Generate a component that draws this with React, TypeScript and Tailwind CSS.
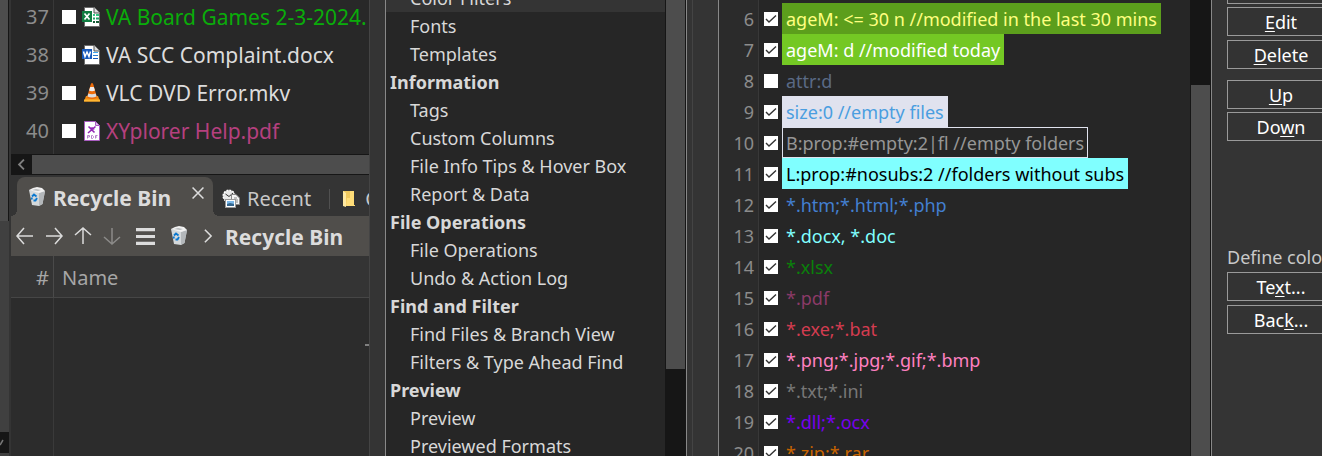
import React from "react";

type Segment = { text: string; cls: string };

function SheetIcon({ children, stroke = "#6b6b6b" }: { children: React.ReactNode; stroke?: string }) {
  return (
    <svg width="20" height="22" viewBox="0 0 20 22" className="shrink-0" aria-hidden="true">
      <path d="M2.500 1.500H12.500L17.500 6.500V20.500H2.500Z" fill="#fff" stroke={stroke} />
      {children}
    </svg>
  );
}

const ExcelIcon = () => (
  <SheetIcon>
    <path d="M12 1.500V7H17.500" fill="#ddd" stroke="#555" />
    <path d="M11 8h2v2h-2z M14 8h3v2h-3z" fill="#33c481" />
    <path d="M11 11.500h2v2h-2z M14 11.500h3v2h-3z" fill="#21a366" />
    <path d="M11 15h2v2h-2z M14 15h3v2h-3z" fill="#185c37" />
    <rect x="0" y="5" width="10" height="11" fill="#107c41" />
    <path d="M2.500 7.500L7.500 13.500M7.500 7.500L2.500 13.500" stroke="#fff" strokeWidth="1.700" />
  </SheetIcon>
);

const WordIcon = () => (
  <SheetIcon>
    <path d="M12 1.500V7H17.500" fill="#ddd" stroke="#555" />
    <path d="M11 8h5v1h-5z" fill="#41a5ee" />
    <path d="M11 11h5v1h-5z" fill="#2b7cd3" />
    <path d="M11 14h5v1h-5z" fill="#185abd" />
    <rect x="0" y="5" width="10" height="10" fill="#185abd" />
    <path d="M1.500 7.500L3 12.500L5 8L7 12.500L8.500 7.500" stroke="#fff" strokeWidth="1.500" fill="none" />
  </SheetIcon>
);

const ConeIcon = () => (
  <svg width="20" height="22" viewBox="0 0 20 22" className="shrink-0" aria-hidden="true">
    <path d="M4 14H16L18 19.500H2Z" fill="#f08c12" />
    <path d="M2 17.500H18V19.500H2Z" fill="#ffb733" />
    <path d="M10 1Q11 1 11.500 3L15 15.500Q10 18.500 5 15.500L8.500 3Q9 1 10 1Z" fill="#ee6c0a" />
    <path d="M8.200 5H11.800L13 8.500Q10 10 7 8.500Z" fill="#eee" />
    <path d="M6.300 11.500Q10 13 13.700 11.500L14.500 14.500Q10 16.500 5.500 14.500Z" fill="#ddd" />
  </svg>
);

const PdfIcon = () => (
  <svg width="20" height="22" viewBox="0 0 20 22" className="shrink-0" aria-hidden="true">
    <path d="M2.500 1.500H13.500L17.500 5.500V20.500H2.500Z" fill="#fff" stroke="#a85cc0" />
    <path d="M13.500 2V5.500H17" fill="#e0b8e8" stroke="#a85cc0" />
    <path d="M6.500 6.500L12.500 12.500M13.500 6.500L6 13M8 8.500Q11 7 12 9.500" stroke="#9427b5" strokeWidth="1.600" fill="none" />
    <path d="M5.500 18.500V15.500H7.500V17H5.500M9.500 15.500V18.500H10.500L11.500 17.500V16.500L10.500 15.500ZM13.500 18.500V15.500H15.500M13.500 17H15" stroke="#b77fca" fill="none" />
  </svg>
);

const BinIcon = () => (
  <svg width="18" height="20" viewBox="0 0 18 20" className="shrink-0" aria-hidden="true">
    <path d="M1 3L17 4L14.500 17L11 19L4 18Z" fill="#d4d8da" />
    <path d="M11 6L17 4L14.500 17L11 19Z" fill="#b3b7ba" />
    <path d="M1 3L5 1L9 0L14 1L17 4L11 6Z" fill="#f1f1f1" />
    <path d="M4 3L8 2L13 3L10 4Z" fill="#b9bcbe" />
    <path d="M4 9.500L6 7.500L8.500 9.500M9 11L7.500 13.500H5.500M4 12.500L3.500 10.500" stroke="#0a78d0" strokeWidth="1.800" fill="none" />
  </svg>
);

const RecentIcon = () => (
  <svg width="18" height="20" viewBox="0 0 18 20" className="shrink-0" aria-hidden="true">
    <circle cx="7" cy="7" r="5.800" fill="#e8e8e8" stroke="#fff" strokeWidth="1.500" strokeDasharray="2 1" />
    <path d="M3.500 5L7 7.500L11 4" stroke="#333" fill="none" />
    <path d="M9.500 5.500H14L17.500 9V15.500H9.500Z" fill="#f4f4f4" stroke="#888" />
    <path d="M12 9h3M12 11h4M12 13h4" stroke="#888" />
    <rect x="3.500" y="10.500" width="10" height="8" fill="#fff" stroke="#999" />
    <path d="M5 12H12V17H5Z" fill="#7ab7e8" />
    <path d="M5 15L8 14L12 15V17H5Z" fill="#35658c" />
  </svg>
);

const FolderIcon = () => (
  <svg width="13" height="18" viewBox="0 0 13 18" className="shrink-0" aria-hidden="true">
    <path d="M1 1H12V15H1Z" fill="#f0c95e" />
    <path d="M5 8H8V1H12V15H13V16H4Z" fill="#ffdd78" />
    <path d="M1 1L4 3V17L1 16Z" fill="#ffe9a0" />
  </svg>
);

function Line({ d, size, label, cls, width = 2 }: { d: string; size: number; label: string; cls: string; width?: number }) {
  return (
    <button type="button" aria-label={label} className={cls}>
      <svg width={size} height={size} viewBox="0 0 18 18" fill="none" stroke="currentColor" strokeWidth={width}>
        <path d={d} />
      </svg>
    </button>
  );
}

const files = [
  { n: 37, name: "VA Board Games 2-3-2024.", cls: "text-[#0aac0a]", Icon: ExcelIcon },
  { n: 38, name: "VA SCC Complaint.docx", cls: "text-[#dcdcdc]", Icon: WordIcon },
  { n: 39, name: "VLC DVD Error.mkv", cls: "text-[#dcdcdc]", Icon: ConeIcon },
  { n: 40, name: "XYplorer Help.pdf", cls: "text-[#b5407f]", Icon: PdfIcon },
];

const nav: { label: string; head?: boolean; active?: boolean }[] = [
  { label: "Color Filters", active: true },
  { label: "Fonts" },
  { label: "Templates" },
  { label: "Information", head: true },
  { label: "Tags" },
  { label: "Custom Columns" },
  { label: "File Info Tips & Hover Box" },
  { label: "Report & Data" },
  { label: "File Operations", head: true },
  { label: "File Operations" },
  { label: "Undo & Action Log" },
  { label: "Find and Filter", head: true },
  { label: "Find Files & Branch View" },
  { label: "Filters & Type Ahead Find" },
  { label: "Preview", head: true },
  { label: "Preview" },
  { label: "Previewed Formats" },
];

const filters: Segment[] = [
  { text: "ageM: <= 30 n //modified in the last 30 mins", cls: "bg-[#5c9e1c] text-[#ffff80] border-transparent" },
  { text: "ageM: d //modified today", cls: "bg-[#74c824] text-white border-transparent" },
  { text: "attr:d", cls: "text-[#5a6a85] border-transparent" },
  { text: "size:0 //empty files", cls: "bg-[#e0e2ee] text-[#4a9ee0] border-transparent" },
  { text: "B:prop:#empty:2|fl //empty folders", cls: "text-[#969696] border-[#e0e2ee]" },
  { text: "L:prop:#nosubs:2 //folders without subs", cls: "bg-[#80ffff] text-black border-transparent" },
  { text: "*.htm;*.html;*.php", cls: "text-[#437fd0] border-transparent" },
  { text: "*.docx, *.doc", cls: "text-[#80ffff] border-transparent" },
  { text: "*.xlsx", cls: "text-[#0a800a] border-transparent" },
  { text: "*.pdf", cls: "text-[#8b3a68] border-transparent" },
  { text: "*.exe;*.bat", cls: "text-[#d43c50] border-transparent" },
  { text: "*.png;*.jpg;*.gif;*.bmp", cls: "text-[#ff80c0] border-transparent" },
  { text: "*.txt;*.ini", cls: "text-[#777777] border-transparent" },
  { text: "*.dll;*.ocx", cls: "text-[#7800f0] border-transparent" },
  { text: "*.zip;*.rar", cls: "text-[#c86400] border-transparent" },
];

function Check({ label, on }: { label: string; on: boolean }) {
  return (
    <span className="grid h-[14px] w-[14px] shrink-0 place-items-center">
      <input
        type="checkbox"
        aria-label={label}
        defaultChecked={on}
        className="peer col-start-1 row-start-1 h-[14px] w-[14px] appearance-none bg-white"
      />
      <svg
        viewBox="0 0 14 14"
        className="pointer-events-none col-start-1 row-start-1 hidden h-[14px] w-[14px] peer-checked:block"
        fill="none"
        stroke="#333"
        strokeWidth="1.400"
      >
        <path d="M2 7L5 10L12 3.500" />
      </svg>
    </span>
  );
}

function PushButton({ before = "", hot, after = "", cls = "" }: { before?: string; hot: string; after?: string; cls?: string }) {
  return (
    <button type="button" className={`h-[29px] w-[108px] shrink-0 border border-[#9a9a9a] bg-[#333] text-[18px] leading-[26px] text-white ${cls}`}>
      {before}
      <span className="underline underline-offset-2">{hot}</span>
      {after}
    </button>
  );
}

function FilePane() {
  return (
    <section className="flex w-[358px] shrink-0 flex-col overflow-hidden bg-[#2c2c2c]">
      <div className="flex h-[154px] shrink-0 flex-col justify-end bg-[#282828]">
        {files.map(({ n, name, cls, Icon }) => (
          <label key={n} className="flex h-[38px] shrink-0 items-center text-[21px]">
            <span className="flex h-full w-[43px] shrink-0 items-center justify-end border-r border-[#383838] pr-1 text-[20px] text-[#8c8c8c]">{n}</span>
            <span className="flex items-center pl-2">
              <Check label={name} on={false} />
            </span>
            <span className="pr-1 pl-[6px]">
              <Icon />
            </span>
            <span className={`pt-px whitespace-nowrap ${cls}`}>{name}</span>
          </label>
        ))}
        <div className="ml-[42px] h-1 shrink-0 border-l border-[#383838]" />
      </div>
      <div className="flex h-[21px] shrink-0 border-y border-[#161616] bg-[#4d4d4d]">
        <Line label="Scroll left" size={11} cls="grid w-[21px] place-items-center bg-[#161616] text-[#808080]" d="M13 1L5 9L13 17" width={3} />
      </div>
      <div className="flex h-[41px] shrink-0 bg-[#343434] pt-[2px]">
        <div className="h-[6px] w-[6px] shrink-0 self-end bg-[radial-gradient(circle_at_top_left,#343434_6px,#504e4b_6px)]" />
        <div className="flex w-[196px] shrink-0 items-center rounded-t-lg bg-[#504e4b] pl-[11px] text-[#dcdcdc]">
          <BinIcon />
          <span className="pt-1 pl-[7px] text-[21px] font-bold whitespace-nowrap">Recycle Bin</span>
          <Line label="Close tab" size={14} cls="mr-2 mb-2 ml-auto" d="M2 2L16 16M16 2L2 16" />
        </div>
        <div className="h-[6px] w-[6px] shrink-0 self-end bg-[radial-gradient(circle_at_top_right,#343434_6px,#504e4b_6px)]" />
        <div className="flex shrink-0 items-center pt-1 pl-[3px] text-[20px] text-[#c8c8c8]">
          <RecentIcon />
          <span className="pr-[18px] pl-[7px]">Recent</span>
          <span className="h-5 border-l border-[#505050] pl-3" />
          <FolderIcon />
          <span className="pl-[10px]">C</span>
        </div>
      </div>
      <div className="flex h-10 shrink-0 items-center bg-[#504e4b] pl-[5px] text-[#dcdcdc]">
        <Line label="Back" size={18} cls="mr-[11px]" d="M17 9H1M8 1L1 9L8 17" width={1.5} />
        <Line label="Forward" size={18} cls="mr-[11px]" d="M1 9H17M10 1L17 9L10 17" width={1.5} />
        <Line label="Up" size={18} cls="mr-[11px]" d="M9 17V1M1 8L9 1L17 8" width={1.5} />
        <Line label="Down" size={18} cls="mr-[15px] text-[#8c8b89]" d="M9 1V17M1 10L9 17L17 10" width={1.5} />
        <Line label="Menu" size={19} cls="mr-[15px]" d="M0 2.500H18M0 9H18M0 15.500H18" width={3} />
        <BinIcon />
        <Line label="Expand" size={14} cls="mr-[10px] ml-[13px]" d="M5 1L13 9L5 17" />
        <span className="pt-[3px] text-[21px] font-bold whitespace-nowrap">Recycle Bin</span>
      </div>
      <div className="flex h-[42px] shrink-0 items-center border-b border-[#464646] bg-[#343434] text-[20px] text-[#a6a6a6]">
        <span className="flex h-full w-[43px] items-center justify-end border-r border-[#4a4a4a] pt-[2px] pr-1">#</span>
        <span className="pt-[2px] pl-2">Name</span>
      </div>
      <div className="flex flex-1">
        <div className="w-[43px] border-r border-[#3a3a3a]" />
        <div className="mt-[46px] ml-auto h-[2px] w-1 bg-[#808080]" />
      </div>
    </section>
  );
}

export default function App() {
  return (
    <main className="flex h-screen overflow-hidden bg-[#343434] font-['Noto_Sans','Open_Sans',sans-serif]">
      <div className="flex w-[11px] shrink-0 flex-col border-r-2 border-[#343434] bg-[#404040]">
        <div className="h-[221px] border-r border-[#161616] bg-[#4d4d4d]" />
        <div className="mt-auto mb-[3px] flex h-[21px] items-center bg-[#161616]">
          <svg width="4" height="8" viewBox="0 0 4 8" fill="none" stroke="#777" strokeWidth="1.500">
            <path d="M0 6L3 1" />
          </svg>
        </div>
      </div>
      <FilePane />
      <div className="w-[17px] shrink-0 border-x border-l-[#444] border-r-[#888]" />
      <nav className="w-[279px] shrink-0 overflow-hidden bg-[#262626]">
        <ul className="-mt-4">
          {nav.map(({ label, head, active }, i) => (
            <li key={i}>
              <a
                href="#"
                className={`block h-7 text-[18px] leading-7 whitespace-nowrap text-[#d8d8d8] ${head ? "pl-1 font-bold" : "pl-6"} ${active ? "bg-[#343434]" : ""}`}
              >
                {label}
              </a>
            </li>
          ))}
        </ul>
      </nav>
      <div className="w-[22px] shrink-0 border-r border-[#888] bg-[#161616] px-px">
        <div className="h-[369px] bg-[#4d4d4d]" />
      </div>
      <div className="w-[6px] shrink-0 border-r border-[#444]" />
      <div className="w-[26px] shrink-0 border-r border-[#888]" />
      <section className="min-w-0 flex-1 overflow-hidden bg-[#262626]">
        <div className="flex h-[3px]">
          <div className="w-10 border-r border-[#383838] bg-[#2b2b2b]" />
        </div>
        {filters.map(({ text, cls }, i) => (
          <label key={text} className="flex h-[31px] items-center text-[18px]">
            <span className="flex h-full w-10 shrink-0 items-center justify-end border-r border-[#383838] bg-[#2b2b2b] pt-[2px] pr-1 text-[#8c8c8c]">{i + 6}</span>
            <span className="pr-1 pl-[5px]">
              <Check label={text} on={i !== 2} />
            </span>
            <span className={`h-[31px] border px-[3px] leading-[31px] whitespace-nowrap ${cls}`}>{text}</span>
          </label>
        ))}
      </section>
      <div className="w-[22px] shrink-0 border-r border-[#888] bg-[#161616] px-px pt-[85px]">
        <div className="h-full bg-[#4d4d4d]" />
      </div>
      <aside className="flex w-[110px] shrink-0 flex-col overflow-hidden pl-[15px]">
        <div className="mb-[3px] h-1 w-[108px] shrink-0 border border-t-0 border-[#9a9a9a]" />
        <PushButton hot="E" after="dit" />
        <PushButton hot="D" after="elete" cls="mt-1" />
        <PushButton hot="U" after="p" cls="mt-[11px]" />
        <PushButton before="Do" hot="w" after="n" cls="mt-[3px]" />
        <p className="mt-[102px] mb-px text-[18px] leading-7 whitespace-nowrap text-[#c8c8c8]">Define colors</p>
        <PushButton before="Te" hot="x" after="t..." />
        <PushButton before="Bac" hot="k" after="..." cls="mt-1" />
      </aside>
    </main>
  );
}
